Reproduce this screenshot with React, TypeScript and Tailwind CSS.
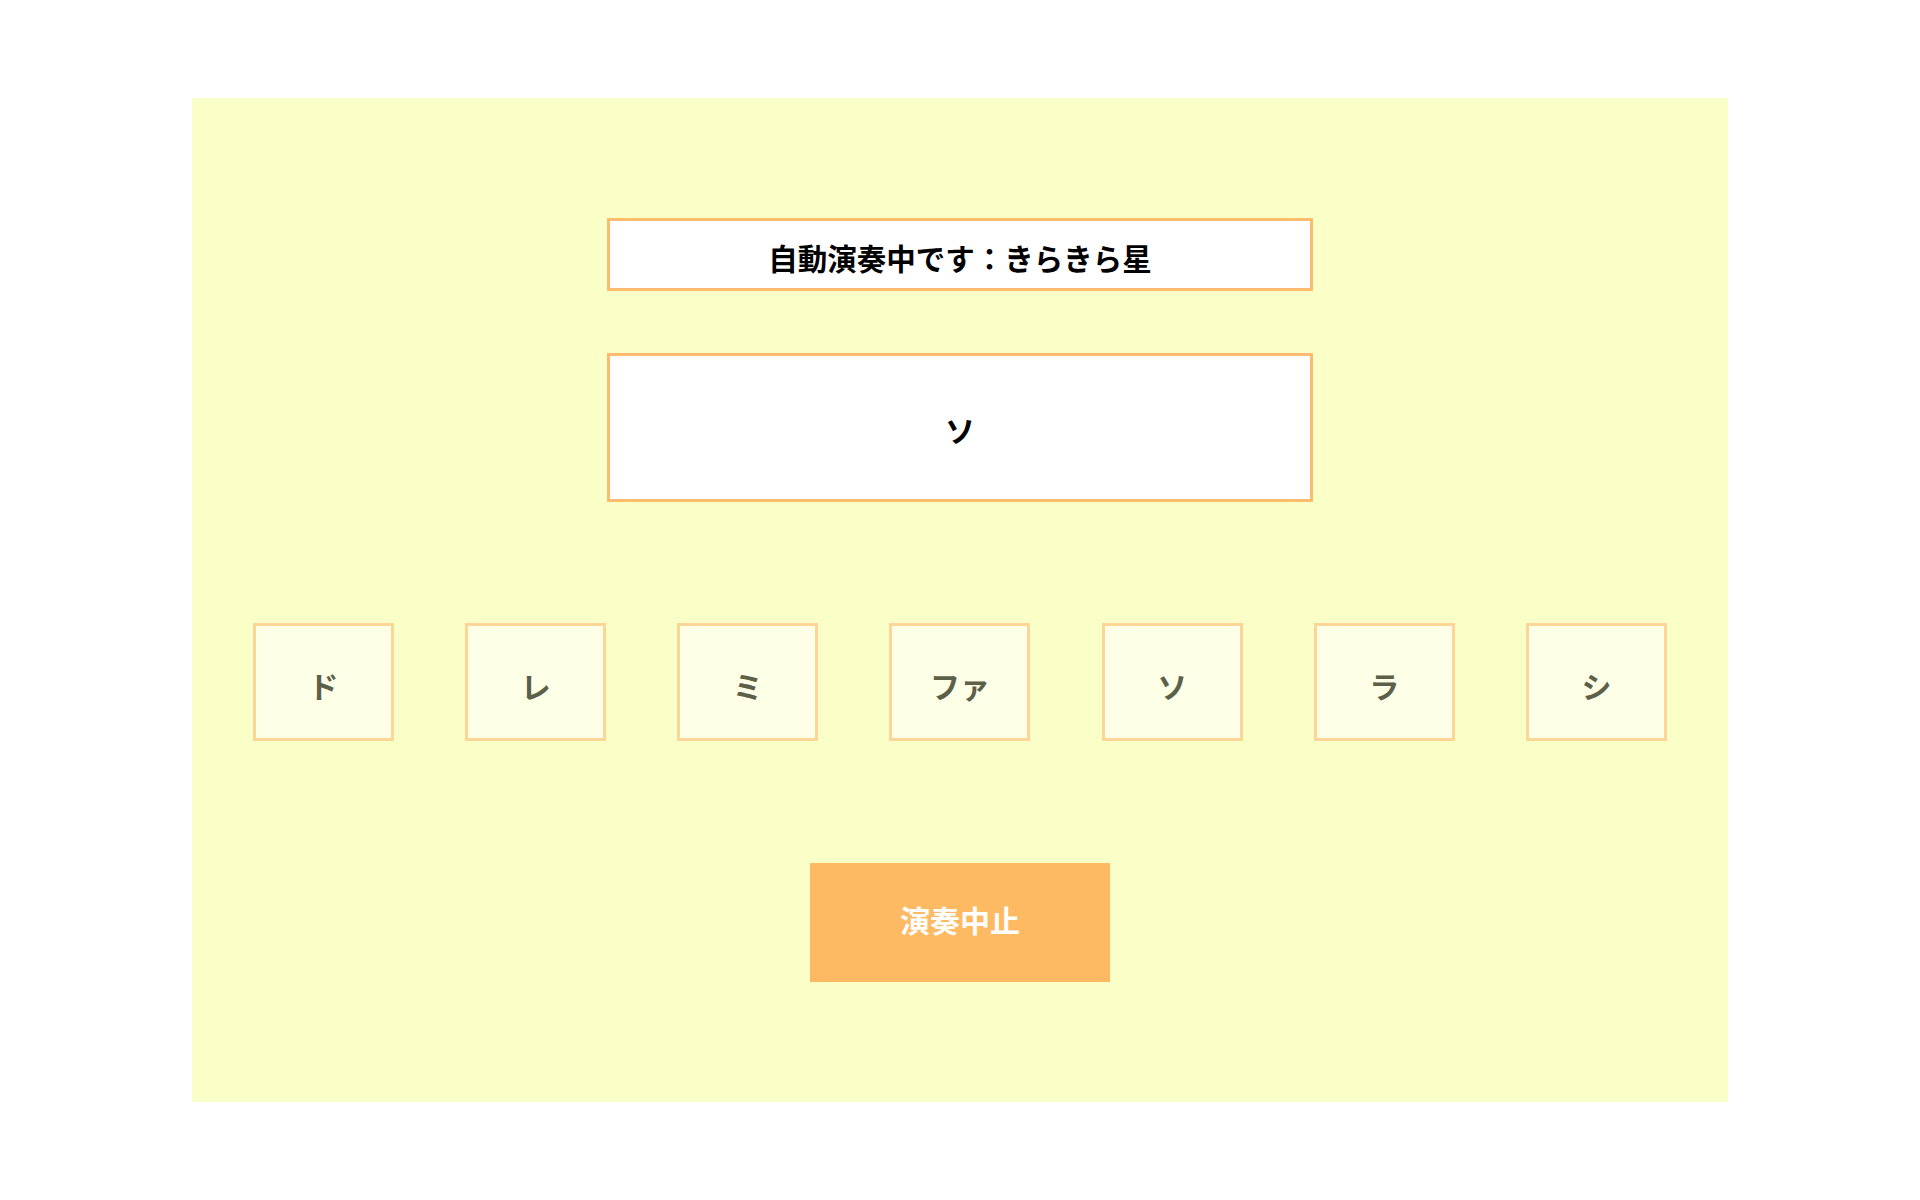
const keys = ["ド", "レ", "ミ", "ファ", "ソ", "ラ", "シ"];

export default function App() {
  return (
    <div
      className="flex h-screen w-full items-center justify-center bg-white"
      style={{ fontFamily: '"Noto Sans CJK JP", "Noto Sans", sans-serif' }}
    >
      <div className="flex h-[1004px] w-[1536px] flex-col items-center bg-[#faffc8] pt-[120px]">
        <div className="flex h-[73px] w-[706px] items-center justify-center border-[3px] border-[#fdbb6e] bg-white pt-[6px] text-[29.5px] font-bold text-black">
          自動演奏中です：きらきら星
        </div>

        <div className="mt-[62px] flex h-[149px] w-[706px] items-center justify-center border-[3px] border-[#fdbb6e] bg-white pt-[4px] text-[30px] font-bold text-black">
          ソ
        </div>

        <div className="mt-[121px] flex w-full justify-between px-[61px]">
          {keys.map((k) => (
            <div
              key={k}
              className="flex h-[118px] w-[141px] items-center justify-center border-[3px] border-[#fdd597] bg-[#fdffe6] pt-[7px] text-[30px] font-bold text-[#5d6049]"
            >
              {k}
            </div>
          ))}
        </div>

        <button className="mt-[122px] flex h-[119px] w-[300px] items-center justify-center bg-[#feba63] pb-[6px] text-[30px] font-bold text-white">
          演奏中止
        </button>
      </div>
    </div>
  );
}
